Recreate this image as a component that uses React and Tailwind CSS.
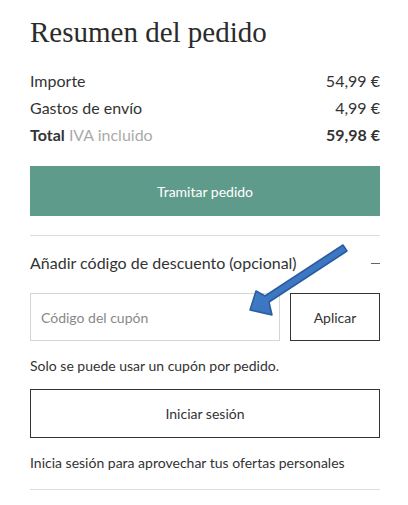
export default function App() {
  return (
    <div className="relative w-[408px] h-[505px] bg-white overflow-hidden" style={{ fontFamily: "Lato, 'Noto Sans', sans-serif" }}>
      <div className="pl-[30px] pr-[28px] pt-[14px] text-[#333]">
        <h1 className="text-[29px] leading-[36px] text-[#2b2b2b]" style={{ fontFamily: "'Liberation Serif', serif" }}>
          Resumen del pedido
        </h1>
        <div className="mt-[17px] text-[16px] leading-[27px]">
          <div className="flex justify-between">
            <span>Importe</span>
            <span>54,99 €</span>
          </div>
          <div className="flex justify-between">
            <span>Gastos de envío</span>
            <span>4,99 €</span>
          </div>
          <div className="flex justify-between">
            <span>
              <span className="font-bold">Total</span> <span className="text-[#aaa]">IVA incluido</span>
            </span>
            <span className="font-bold">59,98 €</span>
          </div>
        </div>
        <button className="mt-[18px] w-full h-[50px] bg-[#5f9b8a] text-white text-[14px] flex items-center justify-center">
          Tramitar pedido
        </button>
        <div className="mt-[19px] border-t border-[#dcdcdc]" />
        <div className="mt-[15px] flex items-center justify-between text-[16px] leading-[24px]">
          <span>Añadir código de descuento (opcional)</span>
          <span className="w-[9px] h-px bg-[#666]" />
        </div>
        <div className="mt-[18px] flex gap-[10px]">
          <div className="flex-1 h-[48px] border border-[#d5d5d5] flex items-center px-[10px] text-[14px] text-[#888]">
            Código del cupón
          </div>
          <button className="w-[90px] h-[48px] border border-[#333] text-[14px] flex items-center justify-center">
            Aplicar
          </button>
        </div>
        <p className="mt-[15px] text-[14px] leading-[20px]">Solo se puede usar un cupón por pedido.</p>
        <button className="mt-[13px] w-full h-[49px] border border-[#333] text-[14px] flex items-center justify-center">
          Iniciar sesión
        </button>
        <p className="mt-[15px] text-[14px] leading-[20px]">Inicia sesión para aprovechar tus ofertas personales</p>
        <div className="mt-[16px] border-t border-[#dcdcdc]" />
      </div>
      <svg className="absolute left-0 top-0 pointer-events-none" width="408" height="505" viewBox="0 0 408 505">
        <defs>
          <linearGradient id="g" x1="0" y1="0" x2="1" y2="1">
            <stop offset="0" stopColor="#4a86d0" />
            <stop offset="1" stopColor="#2f68b5" />
          </linearGradient>
        </defs>
        <polygon
          points="343,245 347,251 269,302 272,315 250,310 256,291 265,296"
          fill="url(#g)"
          stroke="#2a5d9f"
          strokeWidth="1.5"
          strokeLinejoin="round"
        />
      </svg>
    </div>
  );
}
